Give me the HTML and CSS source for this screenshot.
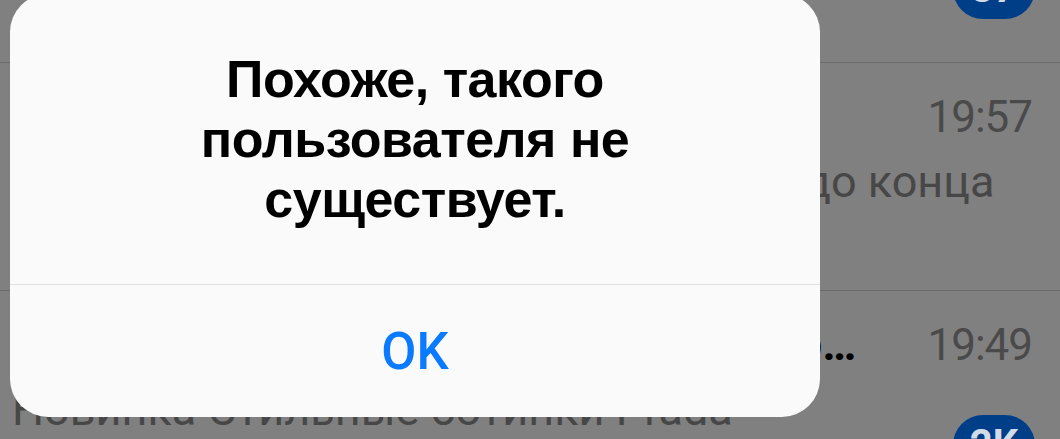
FILE: index.html
```html
<!DOCTYPE html>
<html lang="ru">
<head>
<meta charset="utf-8">
<title>Чаты</title>
<link rel="stylesheet" href="styles.css">
</head>
<body>
<div class="screen">
  <ul class="chats">
    <li class="chat">
      <div class="head"><span class="name">Магазин</span><span class="time">20:03</span></div>
      <div class="body"><p class="preview">Новые поступления уже в каталоге</p><span class="badge">37</span></div>
    </li>
    <li class="chat">
      <div class="head"><span class="name">Поддержка</span><span class="time">19:57</span></div>
      <div class="body"><p class="preview">Скидки на все коллекции действуют до конца месяца</p></div>
    </li>
    <li class="chat">
      <div class="head"><span class="name">Интернет-магазин обуви и аксессуаров</span><span class="time">19:49</span></div>
      <div class="body"><p class="preview">Новинка Стильные ботинки Prada появились в продаже</p><span class="badge">2K</span></div>
    </li>
  </ul>

  <div class="alert" role="alertdialog">
    <div class="alert-body">
      <h2 class="alert-title">Похоже, такого пользователя не существует.</h2>
    </div>
    <button class="alert-btn" type="button">OK</button>
  </div>
</div>
</body>
</html>
```

FILE: styles.css
```css
* {
  box-sizing: border-box;
}

html, body {
  margin: 0;
  padding: 0;
}

body {
  width: 1060px;
  height: 439px;
  overflow: hidden;
  background: #808080;
  font-family: Roboto, "Liberation Sans", sans-serif;
}

.screen {
  position: relative;
  width: 1060px;
  height: 439px;
  overflow: hidden;
}

/* chat list, dimmed behind the alert */
.chats {
  list-style: none;
  margin: -165px 0 0;
  padding: 0;
}

.chat {
  height: 228px;
  padding: 25px 28px 0 12px;
  border-bottom: 1px solid #6b6b6b;
}

.head {
  display: flex;
  align-items: baseline;
}

.name {
  flex: 1;
  min-width: 0;
  margin-right: 55px;
  font-size: 46px;
  font-weight: 700;
  line-height: 56px;
  color: #000;
  white-space: nowrap;
  overflow: hidden;
  text-overflow: ellipsis;
}

.time {
  font-size: 44px;
  line-height: 56px;
  letter-spacing: -1px;
  color: #4a4a4a;
}

.body {
  display: flex;
  align-items: flex-start;
  margin-top: 7px;
}

.preview {
  flex: 1;
  margin: 0;
  font-size: 45px;
  line-height: 60px;
  color: #474747;
  height: 120px;
  overflow: hidden;
}

.badge {
  margin-top: 35px;
  margin-left: 20px;
  margin-right: -3px;
  min-width: 82px;
  height: 60px;
  padding: 0 14px;
  border-radius: 30px;
  background: #003f88;
  color: #d3dbe8;
  font-size: 40px;
  font-weight: 700;
  line-height: 60px;
  text-align: center;
}

/* alert dialog */
.alert {
  position: absolute;
  left: 10px;
  top: -6px;
  width: 810px;
  height: 423px;
  border-radius: 38px;
  background: #fafafa;
  display: flex;
  flex-direction: column;
  overflow: hidden;
}

.alert-body {
  padding: 55px 150px 55px;
  border-bottom: 1px solid #e1e1e3;
}

.alert-title {
  margin: 0;
  font-family: "Liberation Sans", Arial, sans-serif;
  font-size: 52px;
  font-weight: 700;
  line-height: 60px;
  letter-spacing: -0.5px;
  text-align: center;
  color: #000;
}

.alert-btn {
  flex: 1;
  border: 0;
  background: transparent;
  padding: 0;
  font-family: Roboto, "Liberation Sans", sans-serif;
  font-size: 51px;
  font-weight: 500;
  color: #0a7bff;
}
```
